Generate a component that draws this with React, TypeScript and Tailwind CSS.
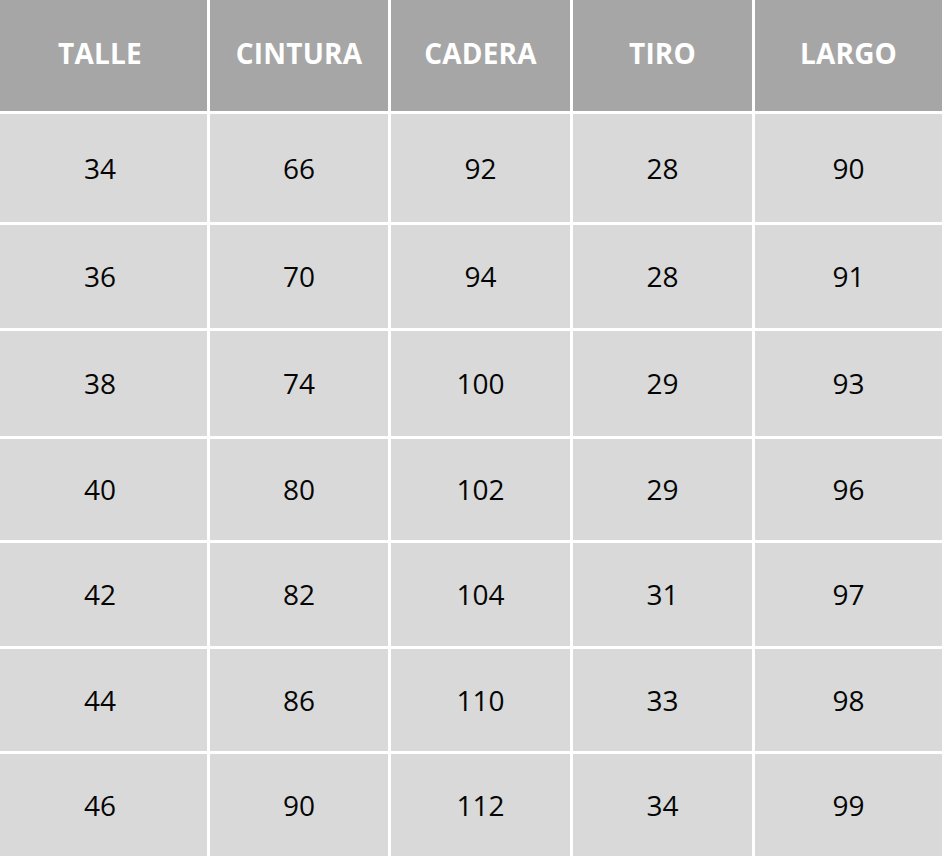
import React from 'react';

const headers = ['TALLE', 'CINTURA', 'CADERA', 'TIRO', 'LARGO'];

const rows = [
  ['34', '66', '92', '28', '90'],
  ['36', '70', '94', '28', '91'],
  ['38', '74', '100', '29', '93'],
  ['40', '80', '102', '29', '96'],
  ['42', '82', '104', '31', '97'],
  ['44', '86', '110', '33', '98'],
  ['46', '90', '112', '34', '99'],
];

const App: React.FC = () => {
  return (
    <div className="w-[942px] h-[856px] bg-white font-['Open_Sans',sans-serif]">
      <div className="grid grid-cols-[207px_178px_179px_179px_187px] grid-rows-[111px_108px_103px_105px_101px_103px_102px_102px] gap-[3px]">
        {headers.map((h, j) => (
          <div
            key={h}
            className={`bg-[#a6a6a6] flex items-center justify-center pb-[5px] text-white font-bold text-[28px] tracking-[0.2px] ${j === 0 ? 'pr-[7px]' : ''}`}
          >
            {h}
          </div>
        ))}
        {rows.map((row, i) =>
          row.map((cell, j) => (
            <div
              key={`${i}-${j}`}
              className={`bg-[#d9d9d9] flex items-center justify-center pb-[1px] text-[#050505] text-[28px] ${j === 0 ? 'pr-[7px]' : ''}`}
            >
              {cell}
            </div>
          ))
        )}
      </div>
    </div>
  );
};

export default App;
